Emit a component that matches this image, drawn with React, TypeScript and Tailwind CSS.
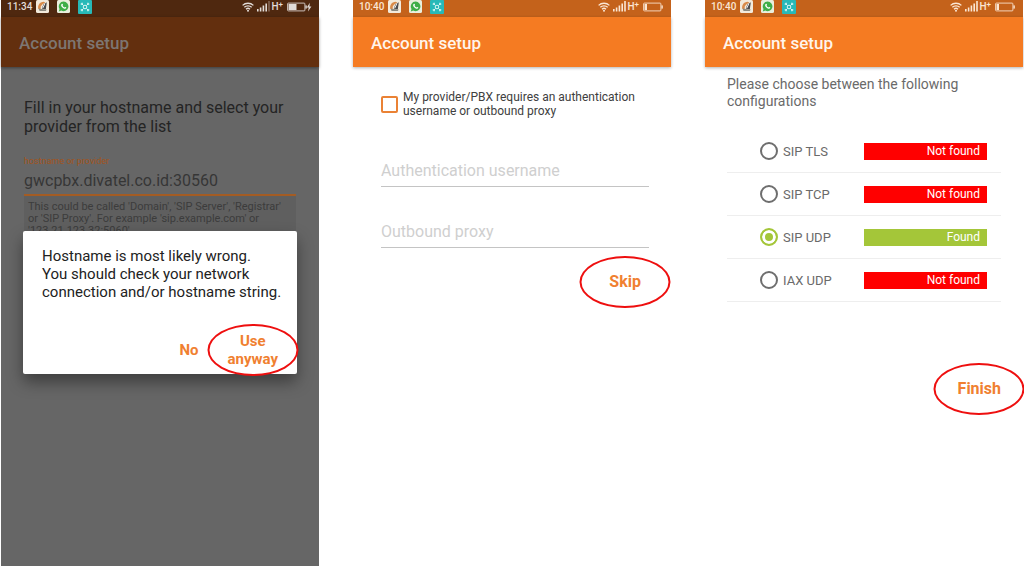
import type { ReactNode } from "react";

const CALLOUT =
  "pointer-events-none absolute left-1/2 top-1/2 h-[52px] w-[91px] -translate-x-1/2 -translate-y-1/2 rounded-[50%] border-2 border-[#ee0f0f]";

function NoteIcon() {
  return (
    <svg className="size-[13px]" viewBox="0 0 13 13" aria-hidden="true">
      <rect width="13" height="13" rx="1.5" fill="#f3eadb" />
      <path d="M2.2 8.800C1.800 5 3.600 2 7.600 1.800L9.400 2.600 6.600 4.200 4.800 6.200 4.600 9.400Z" fill="#d98b4a" />
      <path d="M10.800 2.200 7.400 4.400 5.800 8.600 9.800 9.400Z" fill="#4a4a4c" />
      <path d="M2.400 8.600 3.600 10.900 9.800 11 10.800 9.400 5.400 9Z" fill="#8c8a80" />
      <path d="M8.800 3.800 6.800 8" stroke="#fff" strokeWidth="0.9" />
    </svg>
  );
}

function ChatIcon() {
  return (
    <svg className="size-[13px]" viewBox="0 0 13 13" aria-hidden="true">
      <rect width="13" height="13" rx="1.5" fill="#e9eedd" />
      <path d="M6.6 1.6a4.8 4.8 0 1 1-2.3 9L1.8 11.4l.7-2.5A4.8 4.8 0 0 1 6.6 1.6Z" fill="#3fae49" />
      <path
        d="M4.8 3.9c.5-.4.9 0 1.2.9.1.4-.4.6-.4.9.4.8 1 1.4 1.8 1.7.3 0 .5-.6.9-.5.9.4 1.2.7.9 1.2-.5.8-1.4.8-2.5.3C5.3 7.7 4.3 6.6 4.1 5.3c0-.6.2-1.1.7-1.4Z"
        fill="#fff"
      />
    </svg>
  );
}

function ScanIcon() {
  return (
    <svg className="size-[14px]" viewBox="0 0 14 14" aria-hidden="true">
      <rect width="14" height="14" rx="1" fill="#27b9b8" />
      <g fill="none" stroke="#d9f6f4" strokeWidth="1">
        <path d="M3.3 5V3.3H5M9 3.3h1.7V5M10.7 9v1.7H9M5 10.7H3.3V9" />
        <circle cx="7" cy="7" r="1.8" />
        <path d="m4 4 1.6 1.6M10 4 8.4 5.6M4 10l1.6-1.6M10 10 8.4 8.4" />
      </g>
    </svg>
  );
}

function WifiIcon() {
  return (
    <svg className="h-[10px] w-[12px]" viewBox="0 0 12 10" fill="none" stroke="currentColor" strokeWidth="1.3" aria-hidden="true">
      <path d="M.6 3.4a7.8 7.8 0 0 1 10.8 0M2.3 5.3a5.3 5.3 0 0 1 7.4 0M4 7.2a2.9 2.9 0 0 1 4 0" />
      <circle cx="6" cy="8.7" r="1" fill="currentColor" stroke="none" />
    </svg>
  );
}

function SignalIcon({ weak }: { weak?: boolean }) {
  return (
    <svg className="h-[11px] w-[13px]" viewBox="0 0 13 11" fill="currentColor" aria-hidden="true">
      <rect x="0" y="8" width="1.6" height="2.5" />
      <rect x="2.8" y="6.5" width="1.6" height="4" />
      <rect x="5.6" y="4.5" width="1.6" height="6" />
      <rect x="8.4" y="2.5" width="1.6" height="8" />
      <rect x="11.2" y="0" width="1.6" height="10.5" opacity={weak ? 0.35 : 1} />
    </svg>
  );
}

function BatteryIcon({ charging }: { charging?: boolean }) {
  return (
    <svg className={charging ? "h-[10px] w-[25px]" : "h-[10px] w-[20px]"} viewBox={charging ? "0 0 25 10" : "0 0 20 10"} aria-hidden="true">
      <rect x=".6" y="1.1" width="17.3" height="7.8" rx=".8" fill="none" stroke="currentColor" strokeWidth="1" opacity=".85" />
      <rect x="1.5" y="2" width={charging ? 8 : 2.5} height="6" fill="currentColor" />
      <rect x="18.4" y="3.4" width="1.4" height="3.2" fill="currentColor" />
      {charging && <path d="M22.8.8 19.8 5.6h1.9L21 9.4l3.4-5H22.4Z" fill="currentColor" />}
    </svg>
  );
}

function StatusBar({ time, charging }: { time: string; charging?: boolean }) {
  return (
    <div
      className={
        charging
          ? "flex h-[17px] items-start bg-[#4f280f] pl-1.5 pr-[7px] text-[#e2dcd8]"
          : "flex h-[17px] items-start bg-[#c4621b] pl-1.5 pr-2 text-[#fbe6d3]"
      }
    >
      <span className="text-[10px] font-medium leading-[14px]">{time}</span>
      <div className="ml-1 flex gap-2">
        <NoteIcon />
        <ChatIcon />
        <ScanIcon />
      </div>
      <div className="ml-auto flex h-[13px] items-center">
        <WifiIcon />
        <span className="ml-[3px]">
          <SignalIcon weak={charging} />
        </span>
        <span className="ml-px flex text-[10px] font-medium leading-[14px]">
          H<span className="text-[8px] leading-[9px]">+</span>
        </span>
        <span className="ml-1">
          <BatteryIcon charging={charging} />
        </span>
      </div>
    </div>
  );
}

function Phone({ time, dimmed, children }: { time: string; dimmed?: boolean; children: ReactNode }) {
  return (
    <section className={dimmed ? "relative flex flex-col bg-[#666666]" : "relative flex flex-col bg-white"}>
      <StatusBar time={time} charging={dimmed} />
      <header
        className={
          dimmed
            ? "flex h-[50px] items-center bg-[#632f0e] px-[18px] text-[#7d7672] shadow-[0_1px_3px_rgba(0,0,0,0.4)]"
            : "flex h-[50px] items-center bg-[#f57b22] px-[18px] text-[#fff5ec] shadow-[0_1px_3px_rgba(0,0,0,0.3)]"
        }
      >
        <h1 className="pt-0.5 text-[17px] font-medium leading-5">Account setup</h1>
      </header>
      {children}
    </section>
  );
}

function HostnameScreen() {
  return (
    <Phone time="11:34" dimmed>
      <div className="px-[23px] pt-[31px]">
        <p className="text-[16px] leading-[19px] text-[#242424]">Fill in your hostname and select your provider from the list</p>
        <label htmlFor="hostname" className="mt-[19px] block text-[9px] leading-3 text-[#a3541c]">
          hostname or provider
        </label>
        <input
          id="hostname"
          type="text"
          defaultValue="gwcpbx.divatel.co.id:30560"
          className="mt-1 block w-full border-b-2 border-[#a35c24] bg-transparent pb-[3px] text-[16px] leading-5 text-[#363636] outline-none"
        />
        <p className="bg-[#5f5f5f] px-1 pb-1 pt-[5px] text-[11px] leading-3 text-[#3c3c3c]">
          This could be called 'Domain', 'SIP Server', 'Registrar' or 'SIP Proxy'. For example 'sip.example.com' or '123.21.123.32:5060'
        </p>
      </div>
      <div className="absolute inset-0 flex items-center justify-center px-[22px] pt-[38px]">
        <div role="dialog" aria-label="Hostname warning" className="w-full rounded-[2px] bg-white px-[19px] pb-1.5 pt-4 shadow-[0_8px_16px_rgba(0,0,0,0.4)]">
          <p className="whitespace-nowrap text-[15px] leading-[18px] text-[#222222]">
            Hostname is most likely wrong.
            <br />
            You should check your network
            <br />
            connection and/or hostname string.
          </p>
          <div className="mt-[31px] flex items-center justify-end gap-[29px] text-[15px] font-bold leading-[18px] text-[#f08030]">
            <button type="button">No</button>
            <button type="button" className="relative">
              Use
              <br />
              anyway
              <span className={CALLOUT} />
            </button>
          </div>
        </div>
      </div>
    </Phone>
  );
}

function AuthField({ label }: { label: string }) {
  return (
    <input
      type="text"
      aria-label={label}
      placeholder={label}
      className="block w-full border-b border-[#c4c4c4] bg-transparent pb-[5px] text-[16px] leading-5 text-[#444444] outline-none placeholder:text-[#cfcfcf]"
    />
  );
}

function ProviderScreen() {
  return (
    <Phone time="10:40">
      <form className="pl-7 pr-[22px] pt-[23px]">
        <label className="flex items-center gap-[5px] text-[12px] leading-[14px] text-[#404040]">
          <input type="checkbox" className="size-[17px] shrink-0 appearance-none rounded-[2px] border-2 border-[#ea8235] checked:bg-[#ea8235]" />
          <span>My provider/PBX requires an authentication username or outbound proxy</span>
        </label>
        <div className="mt-[43px] flex flex-col gap-[35px]">
          <AuthField label="Authentication username" />
          <AuthField label="Outbound proxy" />
        </div>
        <div className="mt-[25px] flex justify-end pr-2">
          <button type="button" className="relative text-[16px] font-bold leading-[18px] text-[#f08030]">
            Skip
            <span className={CALLOUT} />
          </button>
        </div>
      </form>
    </Phone>
  );
}

const CONFIGS = [
  { name: "SIP TLS", found: false },
  { name: "SIP TCP", found: false },
  { name: "SIP UDP", found: true },
  { name: "IAX UDP", found: false },
];

function ConfigScreen() {
  return (
    <Phone time="10:40">
      <form className="px-[22px] pt-[9px]">
        <p className="text-[14px] leading-[17px] text-[#6a6a6a]">Please choose between the following configurations</p>
        <ul className="mt-5">
          {CONFIGS.map((config) => (
            <li key={config.name} className="flex h-[43px] items-center border-b border-[#eeeeee] pl-[33px] pr-[14px]">
              <label className="flex w-[104px] items-center gap-[5px] text-[13px] leading-[17px] text-[#6a6a6a]">
                <input
                  type="radio"
                  name="config"
                  defaultChecked={config.found}
                  className="size-[18px] shrink-0 appearance-none rounded-full border-2 border-[#6e6e6e] checked:border-[#a4c639] checked:bg-[#a4c639] checked:shadow-[inset_0_0_0_3px_#ffffff]"
                />
                {config.name}
              </label>
              <span
                className={
                  config.found
                    ? "flex-1 bg-[#a4c639] pr-[7px] text-right text-[12px] leading-[17px] text-white"
                    : "flex-1 bg-[#ff0000] pr-[7px] text-right text-[12px] leading-[17px] text-white"
                }
              >
                {config.found ? "Found" : "Not found"}
              </span>
            </li>
          ))}
        </ul>
        <div className="mt-[78px] flex justify-end">
          <button type="button" className="relative text-[16px] font-bold leading-[18px] text-[#f08030]">
            Finish
            <span className={CALLOUT} />
          </button>
        </div>
      </form>
    </Phone>
  );
}

export default function App() {
  return (
    <main className="grid min-h-screen grid-cols-3 gap-[34px] bg-white px-px pb-[3px] font-[Roboto,sans-serif]">
      <HostnameScreen />
      <ProviderScreen />
      <ConfigScreen />
    </main>
  );
}
